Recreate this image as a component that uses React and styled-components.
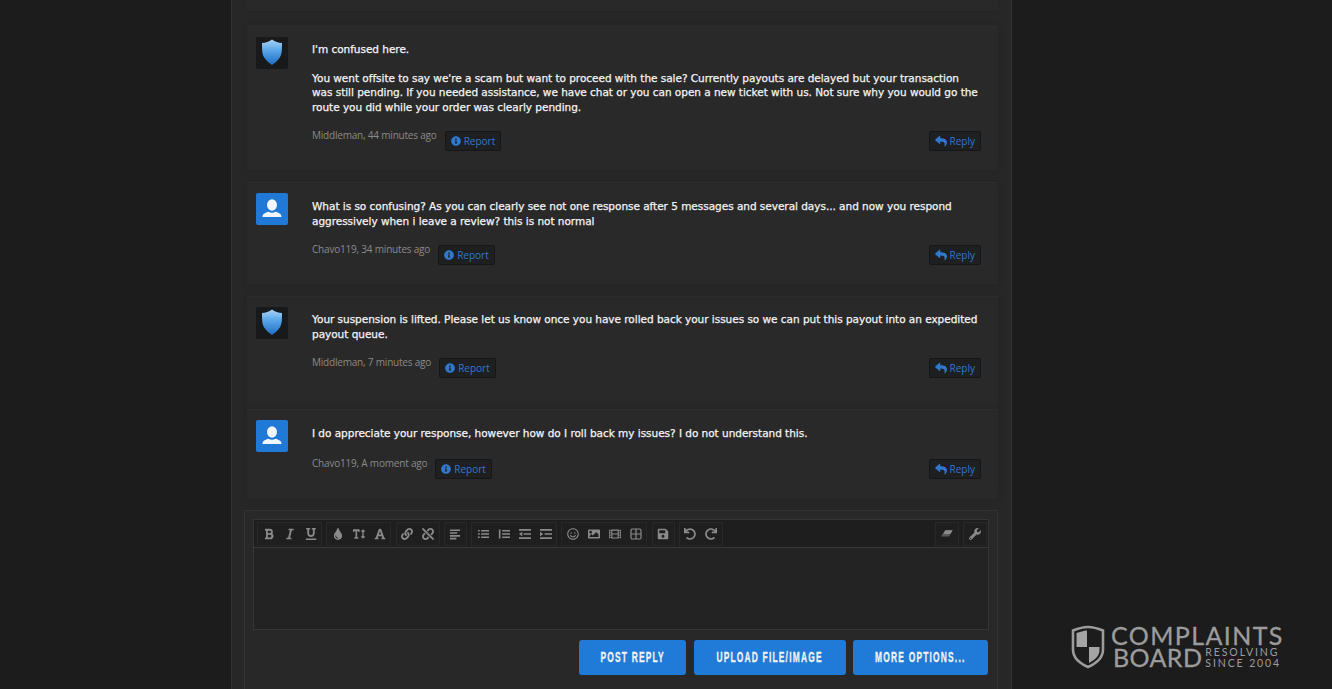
import React from "react";
import styled, { createGlobalStyle } from "styled-components";
import {
  FaBold, FaItalic, FaUnderline, FaTint, FaTextHeight, FaFont, FaLink, FaUnlink,
  FaRegSmile, FaImage, FaFilm, FaSave, FaWrench, FaInfoCircle, FaReply, FaUndo, FaRedo,
} from "react-icons/fa";

const GlobalStyle = createGlobalStyle`
  html, body {
    margin: 0;
    height: 689px;
    overflow: hidden;
    background: #1c1c1c;
  }
`;

const Page = styled.div`
  position: relative;
  height: 689px;
  overflow: hidden;
  padding-left: 231px;
`;

const Column = styled.div`
  width: 781px;
  height: 689px;
  box-sizing: border-box;
  background: #272727;
  border-left: 1px solid #323232;
  border-right: 1px solid #323232;
  padding: 0 13px 0 15px;
  display: flex;
  flex-direction: column;
`;

const PrevCard = styled.div`
  height: 11px;
  flex: none;
  margin-bottom: 14px;
  background: #292929;
  border-bottom: 1px solid #242424;
`;

const Card = styled.article`
  height: ${(p) => p.$height}px;
  margin-bottom: ${(p) => p.$gap}px;
  flex: none;
  box-sizing: border-box;
  display: flex;
  padding: 10px 17px 0 9px;
  background: #292929;
  border-top: 1px solid #2d2d2d;
  box-shadow: 0 0 4px #252525;
`;

const Avatar = styled.div`
  width: 32px;
  height: 32px;
  flex: none;
  margin-right: 24px;
  border-radius: 2px;
  overflow: hidden;
  background: ${(p) => (p.$staff ? "#17191b" : "#2079d6")};
  svg { display: block; }
`;

const Body = styled.div`
  flex: 1;
  min-width: 0;
`;

const Message = styled.p`
  margin: 0 0 ${(p) => p.$after}px;
  padding-top: ${(p) => p.$top}px;
  font: 400 10.5px/14.6px "DejaVu Sans", Verdana, sans-serif;
  letter-spacing: -0.03px;
  -webkit-text-stroke: 0.25px #f4f4f4;
  color: #f4f4f4;
  white-space: pre-line;
`;

const MetaRow = styled.div`
  display: flex;
  align-items: flex-start;
`;

const Meta = styled.span`
  font: 10px/14px "Open Sans", Tahoma, sans-serif;
  letter-spacing: -0.2px;
  color: #8a8a8a;
  margin-right: 8px;
`;

const LinkButton = styled.a`
  display: inline-flex;
  align-items: center;
  gap: 3px;
  height: 20px;
  box-sizing: border-box;
  padding: 0 5px;
  margin-top: 3px;
  margin-left: ${(p) => (p.$push ? "auto" : "0")};
  background: #1e1f21;
  border: 1px solid #161616;
  border-radius: 2px;
  font: 10px/1 "Open Sans", Tahoma, sans-serif;
  color: #2f79cf;
  svg { width: ${(p) => p.$icon}px; height: ${(p) => p.$icon}px; }
`;

const Editor = styled.section`
  flex: none;
  margin-top: 11px;
  margin-left: -3px;
  padding: 8px 8px 0;
  height: 180px;
  border: 1px solid #323232;
  border-bottom: 0;
  background: #282828;
`;

const EditorBox = styled.div`
  border: 1px solid #353535;
  background: #232323;
  height: 109px;
`;

const Toolbar = styled.div`
  height: 28px;
  box-sizing: border-box;
  display: flex;
  align-items: center;
  padding: 0 1px 0 3px;
  gap: 4.25px;
  background: #1e1e1e;
  border-bottom: 1px solid #383838;
`;

const ToolGroup = styled.div`
  display: flex;
  align-items: center;
  height: 22px;
  background: #1f1f1f;
  border: 1px solid #282828;
  margin-left: ${(p) => (p.$push ? "auto" : "0")};
`;

const Tool = styled.span`
  width: ${(p) => p.$width || 21}px;
  display: flex;
  align-items: center;
  justify-content: center;
  color: #8a8a8a;
  svg { width: 12px; height: 12px; }
`;

const EditArea = styled.div`
  height: 79px;
`;

const Actions = styled.div`
  display: flex;
  justify-content: flex-end;
  gap: 7.5px;
  margin-top: 10px;
  padding-right: 1px;
`;

const ActionButton = styled.button`
  width: ${(p) => p.$width}px;
  height: 35px;
  padding: 0;
  border: 0;
  border-radius: 3px;
  background: #207bd8;
  color: #f2f2f2;
  display: flex;
  align-items: center;
  justify-content: center;
  font: 700 14px/35px "Liberation Sans", sans-serif;
  letter-spacing: 2px;
  -webkit-text-stroke: 0.3px #f2f2f2;
  white-space: nowrap;
`;

const ButtonLabel = styled.span`
  flex: none;
  transform: scaleX(0.6);
`;

const Logo = styled.div`
  position: absolute;
  left: 1071px;
  top: 625px;
  display: flex;
  color: #9c9c9c;
`;

const LogoText = styled.div`
  margin-left: 6px;
  width: 175px;
  -webkit-text-stroke: 0.3px #9c9c9c;
`;

const LogoTop = styled.div`
  font: 400 25px/21px Lato, sans-serif;
  letter-spacing: 1.4px;
  white-space: nowrap;
`;

const LogoBottom = styled.div`
  display: flex;
  align-items: center;
  margin-left: 2px;
`;

const LogoBoard = styled.span`
  font: 400 25px/23px Lato, sans-serif;
  letter-spacing: 0.4px;
  margin-right: 3px;
`;

const LogoTag = styled.span`
  font: 400 10.5px/11px Lato, sans-serif;
  letter-spacing: 1.9px;
  white-space: nowrap;
  -webkit-text-stroke: 0;
`;

const ShieldAvatar = () => (
  <svg viewBox="0 0 32 32" width="32" height="32">
    <defs>
      <linearGradient id="shieldFill" x1="0" y1="0" x2="0" y2="1">
        <stop offset="0" stopColor="#a9d3f2" />
        <stop offset="0.42" stopColor="#5aa6ea" />
        <stop offset="1" stopColor="#1f6ec4" />
      </linearGradient>
    </defs>
    <path d="M16 2.500c3 2.200 6.500 3.200 10 3.500 0 8-.2 11-2.200 14.500-1.600 2.800-4.600 5.200-7.800 7.500-3.200-2.300-6.200-4.700-7.800-7.500C6.200 17 6 14 6 6c3.500-.3 7-1.300 10-3.500z" fill="url(#shieldFill)" />
  </svg>
);

const UserAvatar = () => (
  <svg viewBox="0 0 32 32" width="32" height="32">
    <ellipse cx="16" cy="12" rx="5" ry="5.800" fill="#f1f6fb" />
    <path d="M6.500 24c0-3.300 3-4.300 6-5.200 2 1.200 5 1.200 7 0 3 .9 6 1.900 6 5.200z" fill="#f1f6fb" />
  </svg>
);

const TableIcon = () => (
  <svg viewBox="0 0 12 12" fill="none" stroke="currentColor" strokeWidth="1.200">
    <rect x="1" y="1" width="10" height="10" rx="1.200" />
    <path d="M6 1v10M1 6h10" />
  </svg>
);

// toolbar glyphs with the heavy bars of the old icon set
const Bars = ({ d, children }) => (
  <svg viewBox="0 0 13 12" fill="none" stroke="currentColor" strokeWidth="1.700">
    <path d={d} />
    {children}
  </svg>
);

const AlignIcon = () => <Bars d="M1 2h11M1 5h8M1 8h11M1 11h7" />;
const BulletIcon = () => <Bars d="M1 2.500h2M1 6h2M1 9.500h2M4.500 2.500H13M4.500 6H13M4.500 9.500H13" />;
const NumberIcon = () => <Bars d="M1.800 1v10M4.500 2.500H13M4.500 6H13M4.500 9.500H13" />;
const OutdentIcon = () => (
  <Bars d="M0 1.500h13M0 10.500h13M5 6h8">
    <path d="M3.500 3.500v5L0 6z" fill="currentColor" stroke="none" />
  </Bars>
);
const IndentIcon = () => (
  <Bars d="M0 1.500h13M0 10.500h13M5 6h8">
    <path d="M0 3.500v5L3.500 6z" fill="currentColor" stroke="none" />
  </Bars>
);

const EraserIcon = () => (
  <svg viewBox="0 0 14 12" fill="currentColor">
    <path d="M5 1.500h8.500L9.500 9H4.300l-2.300 0L0 9z" opacity="0.55" />
    <path d="M5 1.500h8.500L11 6H2.500z" />
  </svg>
);

const LogoShield = () => (
  <svg viewBox="0 0 34 44" width="34" height="44">
    <path d="M2 5.500C7 3.500 12 2 17 2s10 1.500 15 3.500v19C32 33 25 38.500 17 42 9 38.500 2 33 2 24.500z" fill="none" stroke="#9c9c9c" strokeWidth="2.600" />
    <path d="M5.500 8C9 6.800 12.500 5.800 16 5.500V22H5.500z" fill="#a4a4a4" />
    <path d="M18 22h10.500v3c0 6-5 10-10.500 13z" fill="#a4a4a4" />
  </svg>
);

const toolGroups = [
  [FaBold, FaItalic, FaUnderline],
  [FaTint, FaTextHeight, FaFont],
  [FaLink, FaUnlink],
  [AlignIcon],
  [BulletIcon, NumberIcon, OutdentIcon, IndentIcon],
  [FaRegSmile, FaImage, FaFilm, TableIcon],
  [FaSave],
  [FaUndo, FaRedo],
];

const posts = [
  {
    staff: true,
    height: 144,
    gap: 12,
    top: 4.5,
    after: 13.5,
    text: "I'm confused here.\n\nYou went offsite to say we're a scam but want to proceed with the sale? Currently payouts are delayed but your transaction was still pending. If you needed assistance, we have chat or you can open a new ticket with us. Not sure why you would go the route you did while your order was clearly pending.",
    meta: "Middleman, 44 minutes ago",
  },
  {
    height: 102,
    gap: 12,
    top: 6,
    after: 14,
    text: "What is so confusing? As you can clearly see not one response after 5 messages and several days... and now you respond aggressively when i leave a review? this is not normal",
    meta: "Chavo119, 34 minutes ago",
  },
  {
    staff: true,
    height: 113,
    gap: 0,
    top: 5,
    after: 14,
    text: "Your suspension is lifted. Please let us know once you have rolled back your issues so we can put this payout into an expedited payout queue.",
    meta: "Middleman, 7 minutes ago",
  },
  {
    height: 90,
    gap: 0,
    top: 6,
    after: 15,
    text: "I do appreciate your response, however how do I roll back my issues? I do not understand this.",
    meta: "Chavo119, A moment ago",
  },
];

const Post = ({ post }) => (
  <Card $height={post.height} $gap={post.gap}>
    <Avatar $staff={post.staff}>{post.staff ? <ShieldAvatar /> : <UserAvatar />}</Avatar>
    <Body>
      <Message $top={post.top} $after={post.after}>{post.text}</Message>
      <MetaRow>
        <Meta>{post.meta}</Meta>
        <LinkButton $icon={10}><FaInfoCircle />Report</LinkButton>
        <LinkButton $icon={12} $push><FaReply />Reply</LinkButton>
      </MetaRow>
    </Body>
  </Card>
);

export default function App() {
  return (
    <Page>
      <GlobalStyle />
      <Column>
        <PrevCard />
        {posts.map((post) => (
          <Post key={post.meta} post={post} />
        ))}
        <Editor>
          <EditorBox>
            <Toolbar>
              {toolGroups.map((group, i) => (
                <ToolGroup key={i}>
                  {group.map((Icon, j) => (
                    <Tool key={j}><Icon /></Tool>
                  ))}
                </ToolGroup>
              ))}
              <ToolGroup $push><Tool $width={22}><EraserIcon /></Tool></ToolGroup>
              <ToolGroup><Tool $width={22}><FaWrench /></Tool></ToolGroup>
            </Toolbar>
            <EditArea />
          </EditorBox>
          <Actions>
            <ActionButton $width={107}><ButtonLabel>POST REPLY</ButtonLabel></ActionButton>
            <ActionButton $width={152}><ButtonLabel>UPLOAD FILE/IMAGE</ButtonLabel></ActionButton>
            <ActionButton $width={135}><ButtonLabel>MORE OPTIONS...</ButtonLabel></ActionButton>
          </Actions>
        </Editor>
      </Column>
      <Logo>
        <LogoShield />
        <LogoText>
          <LogoTop>COMPLAINTS</LogoTop>
          <LogoBottom>
            <LogoBoard>BOARD</LogoBoard>
            <LogoTag>RESOLVING<br />SINCE 2004</LogoTag>
          </LogoBottom>
        </LogoText>
      </Logo>
    </Page>
  );
}
